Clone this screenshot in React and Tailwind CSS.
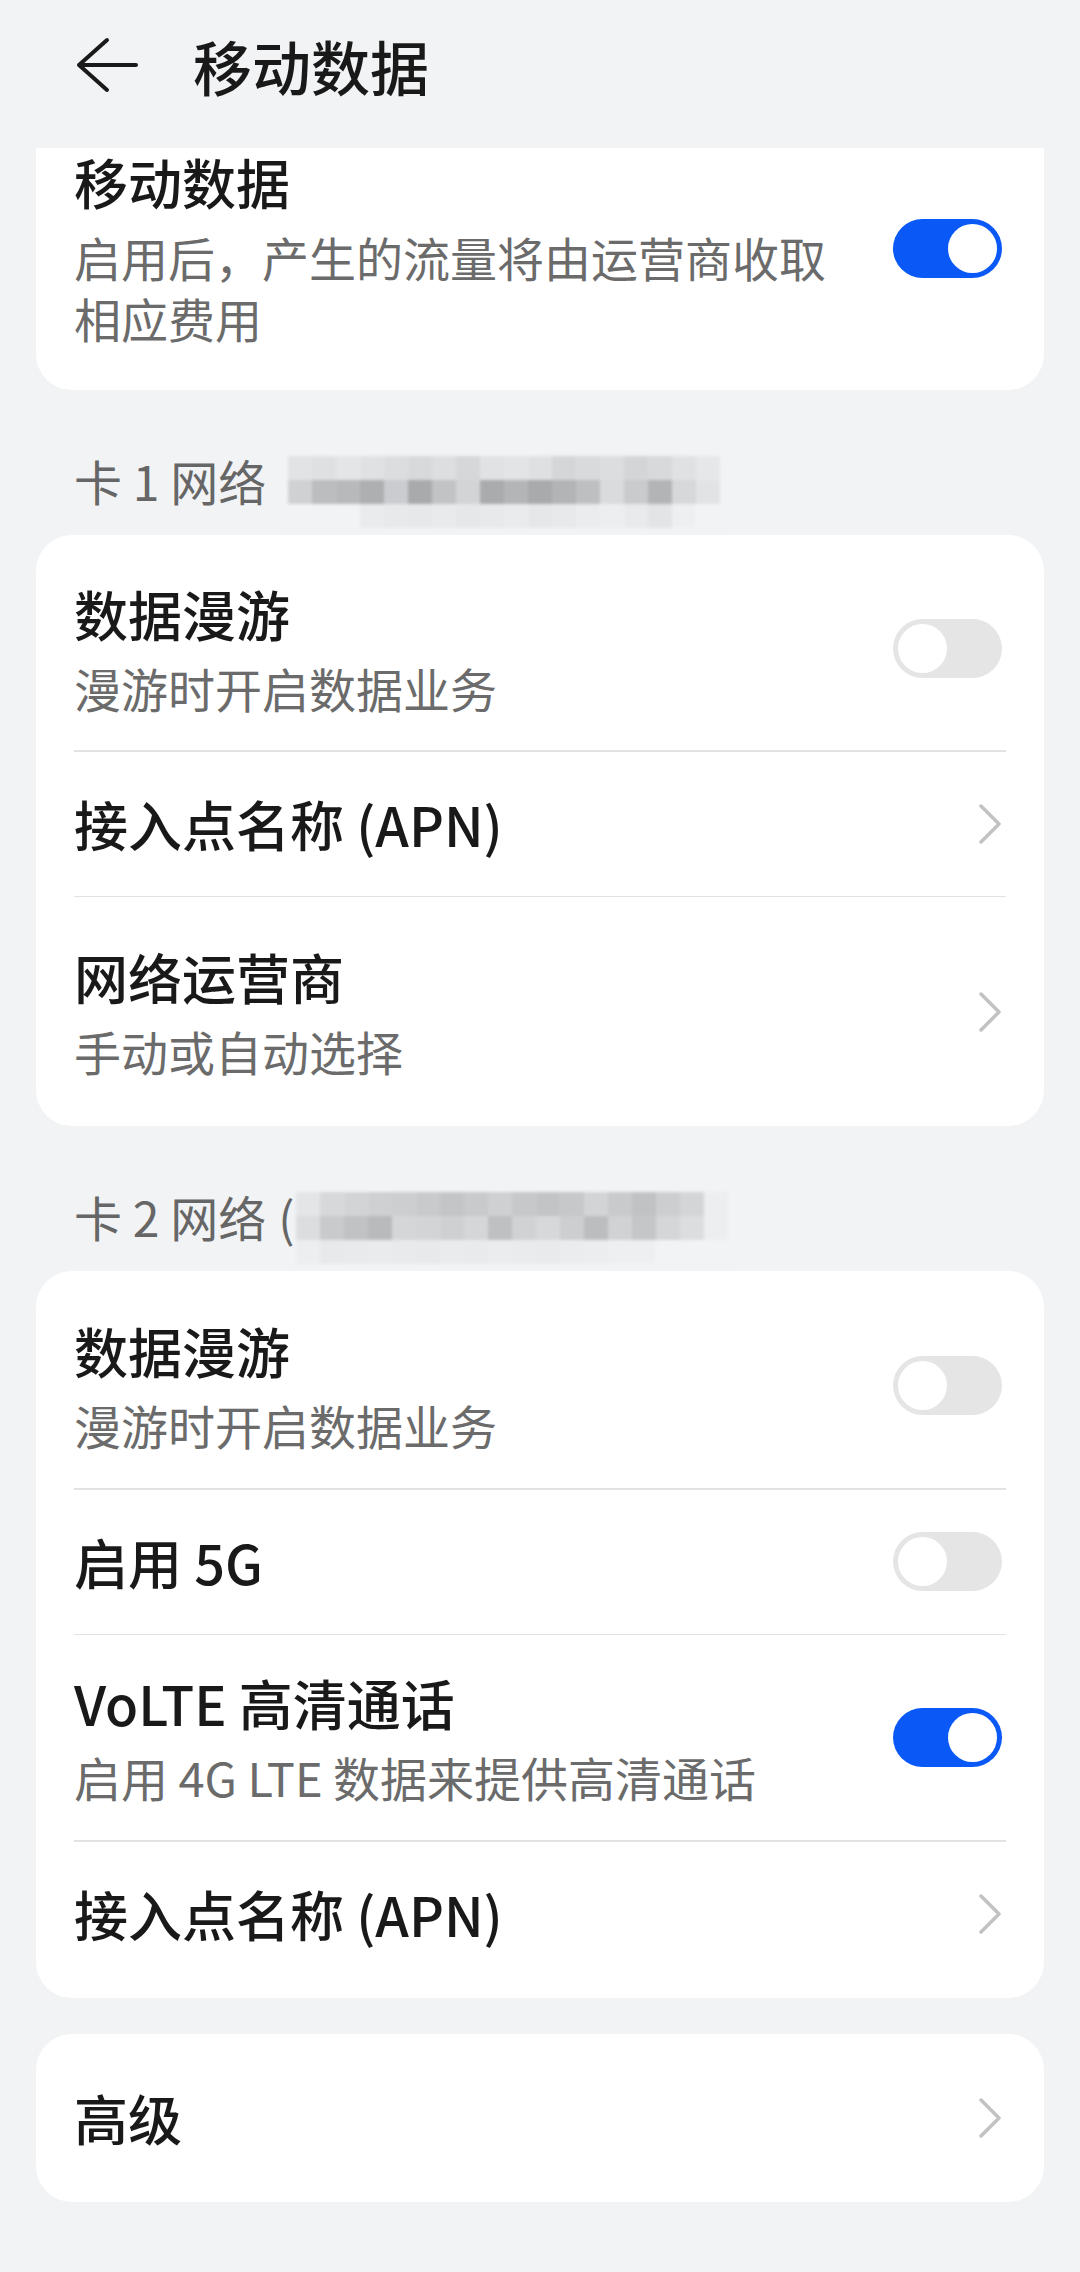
import React from 'react';

const FONT = { fontFamily: '"Noto Sans CJK SC", "Noto Sans", sans-serif' };

// pixelated blur that hides the carrier name
const blur1 = [
  ['#e2e3e5', '#dfe0e2', '#e4e5e7', '#e0e1e3', '#dcdddf', '#d8d9db', '#dddee0', '#d6d7d9', '#e1e2e4', '#e3e4e6', '#dfe0e2', '#d5d6d8', '#d9dadc', '#dcdddf', '#d4d5d7', '#d8d9db', '#e0e1e3', '#e6e7e9'],
  ['#d0d1d3', '#bcbdbf', '#b8b9bb', '#aeafb1', '#cbcccf', '#a9aaac', '#c2c3c5', '#d3d4d6', '#aaabad', '#b4b5b7', '#a9aaac', '#b3b4b6', '#bebfc1', '#dadbdd', '#cacbcd', '#b3b4b6', '#d7d8da', '#e2e3e5'],
  ['#f1f3f5', '#f1f3f5', '#f1f3f5', '#eaebed', '#e8e9eb', '#e7e8ea', '#e9eaec', '#e6e7e9', '#e8e9eb', '#eaebed', '#e6e7e9', '#e8e9eb', '#ebecee', '#eceef0', '#e9eaec', '#e3e4e6', '#eeeff1', '#f1f3f5'],
];

const blur2 = [
  ['#e4e5e7', '#d7d8da', '#d3d4d6', '#cfd0d2', '#cdced0', '#c9cacc', '#c4c5c7', '#c9cacc', '#cfd0d2', '#c7c8ca', '#c3c4c6', '#c7c8ca', '#d3d4d6', '#c9cacc', '#c1c2c4', '#cdced0', '#d4d5d7', '#eceef0'],
  ['#dcdddf', '#c9cacc', '#c1c2c4', '#b9babc', '#d5d6d8', '#d3d4d6', '#cfd0d2', '#d5d6d8', '#bfc0c2', '#d1d2d4', '#d7d8da', '#cdced0', '#bcbdbf', '#d1d2d4', '#c5c6c8', '#d5d6d8', '#dcdddf', '#eceef0'],
  ['#eceef0', '#e8e9eb', '#e9eaec', '#eaebed', '#e9eaec', '#e8e9eb', '#eaebed', '#e9eaec', '#ebecee', '#eaebed', '#e9eaec', '#ebecee', '#ecedef', '#eeeff1', '#eeeff1', '#f1f3f5', '#f1f3f5', '#f1f3f5'],
];

const Pixelated = ({ rows }) => (
  <div className="flex flex-col blur-[1.5px]">
    {rows.map((row, i) => (
      <div key={i} className="flex">
        {row.map((c, j) => (
          <div key={j} className="w-[24px] h-[24px]" style={{ backgroundColor: c }} />
        ))}
      </div>
    ))}
  </div>
);

const Toggle = ({ on }) => (
  <div
    className={`w-[109px] h-[59px] rounded-full flex items-center px-[5px] shrink-0 ${
      on ? 'bg-[#0a59f7] justify-end' : 'bg-[#e5e5e5] justify-start'
    }`}
  >
    <div className="w-[49px] h-[49px] rounded-full bg-white" />
  </div>
);

const Chevron = () => (
  <svg width="24" height="40" viewBox="0 0 24 40" className="shrink-0">
    <path d="M3 2 L21 20 L3 38" fill="none" stroke="#c2c2c2" strokeWidth="3.5" strokeLinecap="round" strokeLinejoin="round" />
  </svg>
);

const Row = ({ title, subtitle, right, h = 'h-[205px]', divider }) => (
  <div className="flex flex-col">
    <div className={`flex items-center pl-[38px] pr-[42px] ${h}`}>
      <div className="flex-1 min-w-0">
        <div className="text-[54px] leading-[72px] font-medium text-[#191919]">{title}</div>
        {subtitle && (
          <div className="text-[47px] leading-[62px] mt-[7px] text-[#6b6b6b]">{subtitle}</div>
        )}
      </div>
      {right === 'on' && <Toggle on />}
      {right === 'off' && <Toggle />}
      {right === 'chevron' && <Chevron />}
    </div>
    {divider && <div className="h-[1.5px] bg-[#e2e2e2] mx-[38px]" />}
  </div>
);

const SectionHeader = ({ label, rows, paren }) => (
  <div className="h-[145px] pt-[52px] pl-[74px] flex items-start">
    <span className="text-[48px] leading-[76px] text-[#666666]">{label}</span>
    {paren && <span className="text-[48px] leading-[76px] text-[#666666] ml-[12px]">(</span>}
    <div className={`pt-[14px] ${paren ? 'ml-[2px]' : 'ml-[22px]'}`}>
      <Pixelated rows={rows} />
    </div>
  </div>
);

export default function App() {
  return (
    <div className="w-[1080px] min-h-[2272px] bg-[#f1f3f5]" style={FONT}>
      {/* Header */}
      <div className="h-[148px] pb-[18px] flex items-center">
        <svg width="62" height="56" viewBox="0 0 62 56" className="ml-[76px]">
          <path d="M31 3 L3 28 L31 53 M3 28 H60" fill="none" stroke="#1a1a1a" strokeWidth="4" strokeLinecap="round" strokeLinejoin="round" />
        </svg>
        <h1 className="ml-[55px] text-[59px] leading-none font-medium text-[#191919]">移动数据</h1>
      </div>

      {/* Mobile data card (scrolled under header) */}
      <div className="mx-[36px] bg-white rounded-b-[36px] pl-[38px] pr-[42px] pb-[42px] flex items-center">
        <div className="flex-1">
          <div className="text-[54px] leading-[68px] font-medium text-[#191919]">移动数据</div>
          <div className="text-[47px] leading-[61px] mt-[10px] text-[#6b6b6b] max-w-[775px]">
            启用后，产生的流量将由运营商收取相应费用
          </div>
        </div>
        <Toggle on />
      </div>

      <SectionHeader label="卡 1 网络" rows={blur1} />

      <div className="mx-[36px] bg-white rounded-[36px] pt-3">
        <Row title="数据漫游" subtitle="漫游时开启数据业务" right="off" h="h-[203px]" divider />
        <Row title="接入点名称 (APN)" right="chevron" h="h-[144px]" divider />
        <Row title="网络运营商" subtitle="手动或自动选择" right="chevron" h="h-[229px]" />
      </div>

      <SectionHeader label="卡 2 网络" rows={blur2} paren />

      <div className="mx-[36px] bg-white rounded-[36px] py-3">
        <Row title="数据漫游" subtitle="漫游时开启数据业务" right="off" divider />
        <Row title="启用 5G" right="off" h="h-[144px]" divider />
        <Row title="VoLTE 高清通话" subtitle="启用 4G LTE 数据来提供高清通话" right="on" divider />
        <Row title="接入点名称 (APN)" right="chevron" h="h-[144px]" />
      </div>

      <div className="mx-[36px] mt-[36px] bg-white rounded-[36px] py-3">
        <Row title="高级" right="chevron" h="h-[144px]" />
      </div>
    </div>
  );
}
